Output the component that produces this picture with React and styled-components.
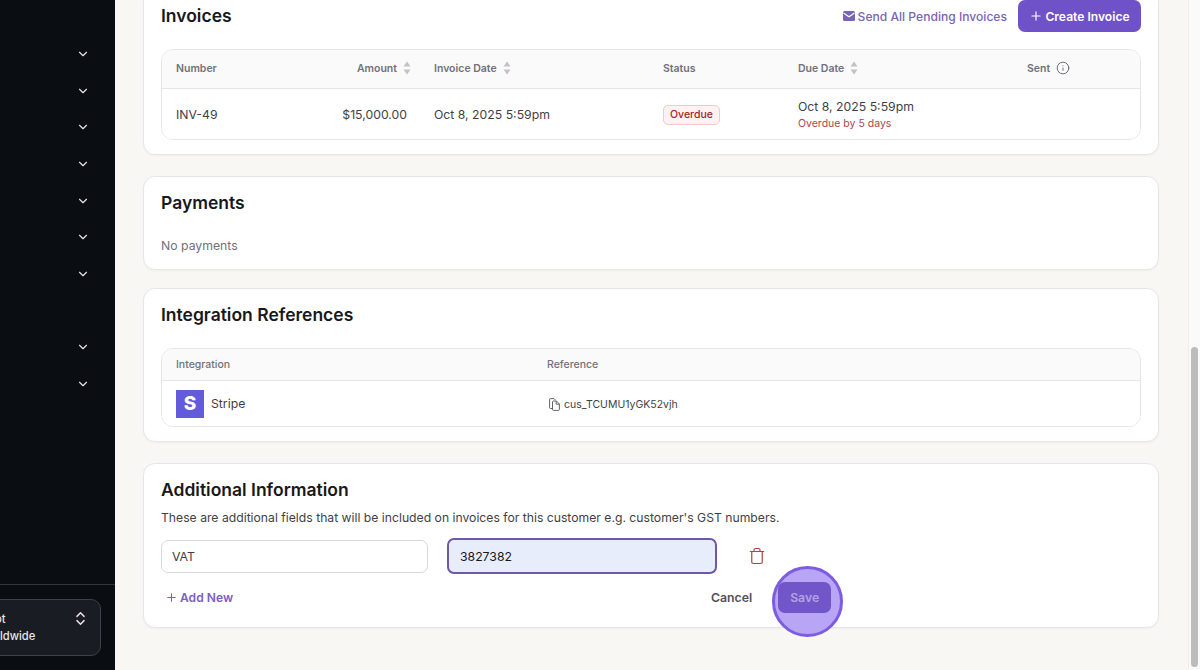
import React from "react";
import styled, { createGlobalStyle } from "styled-components";
import { ChevronDown, ChevronsUpDown, Plus, Trash, Info } from "lucide-react";

const GlobalStyle = createGlobalStyle`
	html, body {
		margin: 0;
		height: 100%;
		overflow: hidden;
		font-family: Inter, "Liberation Sans", sans-serif;
	}
	* {
		box-sizing: border-box;
	}
`;

const SortIcon = () => (
	<SortSvg viewBox="0 0 8 14" width="8" height="14">
		<path d="M4 0.5 L7.5 5.5 H0.5 Z" fill="#c2c2c6" />
		<path d="M4 13.5 L7.5 8.5 H0.5 Z" fill="#c2c2c6" />
	</SortSvg>
);

const MailIcon = () => (
	<svg viewBox="0 0 12 10" width="12" height="10">
		<rect x="0" y="0" width="12" height="10" rx="1.5" fill="#7a64b8" />
		<path d="M0.5 2 L6 5.8 L11.5 2" fill="none" stroke="#fff" strokeWidth="1.1" />
	</svg>
);

const CopyIcon = () => (
	<svg viewBox="0 0 11 13" width="11" height="13" fill="none" stroke="#52525b" strokeWidth="0.9">
		<path d="M3.5 10.5 H1.6 a1 1 0 0 1-1-1 V1.6 a1 1 0 0 1 1-1 H5 l1.6 1.6" />
		<path d="M3.5 4 a1 1 0 0 1 1-1 H7.4 L10.4 6 V11.4 a1 1 0 0 1-1 1 H4.5 a1 1 0 0 1-1-1 Z" />
		<path d="M7.2 3 V6.2 H10.4" />
	</svg>
);

const App = () => {
	const rows = [true, true, true, true, true, true, true, false, true, true];

	return (
		<Page>
			<GlobalStyle />
			<Sidebar>
				<NavList>
					{rows.map((on, i) => (
						<NavRow key={i}>{on && <ChevronDown size={14} strokeWidth={2} />}</NavRow>
					))}
				</NavList>
				<SidebarFooter>
					<Switcher>
						<SwitcherText>
							<SwitcherLine $shift={-5}>ot</SwitcherLine>
							<SwitcherLine>ldwide</SwitcherLine>
						</SwitcherText>
						<SwitcherIcon>
							<ChevronsUpDown size={17} strokeWidth={2} />
						</SwitcherIcon>
					</Switcher>
				</SidebarFooter>
			</Sidebar>

			<Main>
				<Card $top={-11} $height={166}>
					<CardHeader>
						<Title>Invoices</Title>
						<HeaderActions>
							<SendLink>
								<MailIcon />
								Send All Pending Invoices
							</SendLink>
							<CreateButton>
								<Plus size={14} strokeWidth={2} />
								Create Invoice
							</CreateButton>
						</HeaderActions>
					</CardHeader>
					<TableBox>
						<InvoiceGrid $head>
							<HeadCell>Number</HeadCell>
							<HeadCell $right>
								Amount <SortIcon />
							</HeadCell>
							<HeadCell>
								Invoice Date <SortIcon />
							</HeadCell>
							<HeadCell>Status</HeadCell>
							<HeadCell>
								Due Date <SortIcon />
							</HeadCell>
							<HeadCell>
								Sent <Info size={14} strokeWidth={1.4} color="#52525b" />
							</HeadCell>
						</InvoiceGrid>
						<InvoiceGrid>
							<BodyCell>INV-49</BodyCell>
							<AmountCell>$15,000.00</AmountCell>
							<BodyCell>Oct 8, 2025 5:59pm</BodyCell>
							<BodyCell>
								<Badge>Overdue</Badge>
							</BodyCell>
							<BodyCell>
								<div>
									Oct 8, 2025 5:59pm
									<OverdueNote>Overdue by 5 days</OverdueNote>
								</div>
							</BodyCell>
							<BodyCell />
						</InvoiceGrid>
					</TableBox>
				</Card>

				<Card $top={21} $height={94}>
					<Title>Payments</Title>
					<Muted>No payments</Muted>
				</Card>

				<Card $top={18} $height={154}>
					<Title>Integration References</Title>
					<RefBox>
						<RefGrid $head>
							<RefHead>Integration</RefHead>
							<RefHead>Reference</RefHead>
						</RefGrid>
						<RefGrid>
							<StripeCell>
								<StripeLogo>S</StripeLogo>
								Stripe
							</StripeCell>
							<ReferenceCell>
								<CopyIcon />
								cus_TCUMU1yGK52vjh
							</ReferenceCell>
						</RefGrid>
					</RefBox>
				</Card>

				<Card $top={21} $height={165}>
					<Title>Additional Information</Title>
					<Description>
						These are additional fields that will be included on invoices for this customer e.g.
						customer's GST numbers.
					</Description>
					<FieldRow>
						<TextField readOnly value="VAT" />
						<ActiveField readOnly value="3827382" />
						<TrashButton>
							<Trash size={18} strokeWidth={1.6} />
						</TrashButton>
					</FieldRow>
					<FooterRow>
						<AddNew>
							<Plus size={13} strokeWidth={2} />
							Add New
						</AddNew>
						<FooterActions>
							<CancelButton>Cancel</CancelButton>
							<SaveWrap>
								<Spotlight />
								<SaveButton>Save</SaveButton>
							</SaveWrap>
						</FooterActions>
					</FooterRow>
				</Card>
			</Main>

			<ScrollTrack>
				<ScrollThumb />
			</ScrollTrack>
		</Page>
	);
};

const Page = styled.div`
	display: flex;
	width: 1200px;
	height: 670px;
	overflow: hidden;
	background: #f8f7f3;
	color: #18181b;
`;

const Sidebar = styled.aside`
	width: 115px;
	flex-shrink: 0;
	display: flex;
	flex-direction: column;
	background: #0a0d12;
	color: #e6e6e8;
	overflow: hidden;
`;

const NavList = styled.div`
	padding-top: 35.7px;
	flex: 1;
`;

const NavRow = styled.div`
	height: 36.65px;
	display: flex;
	align-items: center;
	justify-content: flex-end;
	padding-right: 25px;
`;

const SidebarFooter = styled.div`
	border-top: 1px solid #33363b;
	padding: 14px 14px 14px 0;
`;

const Switcher = styled.div`
	height: 57px;
	margin-left: -20px;
	padding: 0 11px 0 19px;
	display: flex;
	align-items: center;
	justify-content: space-between;
	background: #1a1c24;
	border: 1px solid #3f4148;
	border-radius: 10px;
`;

const SwitcherText = styled.div`
	font-size: 11.2px;
	font-weight: 500;
	line-height: 17px;
`;

const SwitcherLine = styled.div`
	margin-left: ${({ $shift }) => $shift || 0}px;
`;

const SwitcherIcon = styled.span`
	display: flex;
	align-self: flex-start;
	margin-top: 10px;
`;

const Main = styled.main`
	flex: 1;
	padding: 0 29px 0 28px;
	min-width: 0;
`;

const Card = styled.section`
	height: ${({ $height }) => $height}px;
	margin-top: ${({ $top }) => $top}px;
	padding: 14px 17px;
	background: #fff;
	border: 1px solid #e6e6e6;
	border-radius: 12px;
	box-shadow: 0 1px 2px rgba(0, 0, 0, 0.04);
`;

const CardHeader = styled.div`
	display: flex;
	justify-content: space-between;
	align-items: center;
	height: 32px;
	margin-top: -4px;
	margin-bottom: 17px;
`;

const Title = styled.h2`
	margin: 0;
	font-size: 17.5px;
	line-height: 24px;
	font-weight: 600;
	color: #18181b;
`;

const HeaderActions = styled.div`
	display: flex;
	align-items: center;
	gap: 11px;
`;

const SendLink = styled.span`
	display: inline-flex;
	align-items: center;
	gap: 3px;
	font-size: 12.1px;
	font-weight: 500;
	color: #7a64b8;
`;

const CreateButton = styled.span`
	display: inline-flex;
	align-items: center;
	justify-content: center;
	gap: 2px;
	width: 123px;
	height: 32px;
	font-size: 12.1px;
	font-weight: 600;
	color: #fff;
	background: #6f52c8;
	border-radius: 7px;
`;

const TableBox = styled.div`
	border: 1px solid #e6e6e6;
	border-radius: 12px;
	overflow: hidden;
	height: 91px;
`;

const InvoiceGrid = styled.div`
	display: grid;
	grid-template-columns: 138px 120px 229px 135px 229px 1fr;
	height: ${({ $head }) => ($head ? "39px" : "51px")};
	background: ${({ $head }) => ($head ? "#fafafa" : "#fff")};
	border-bottom: ${({ $head }) => ($head ? "1px solid #e6e6e6" : "none")};
`;

const HeadCell = styled.div`
	display: flex;
	align-items: center;
	justify-content: ${({ $right }) => ($right ? "flex-end" : "flex-start")};
	gap: 6px;
	padding: ${({ $right }) => ($right ? "0 9px 2px 0" : "0 14px 2px")};
	font-size: 10.5px;
	font-weight: 600;
	color: #71717a;
`;

const SortSvg = styled.svg`
	flex-shrink: 0;
`;

const BodyCell = styled.div`
	display: flex;
	align-items: center;
	padding: 0 14px;
	font-size: 12.25px;
	color: #3f3f46;
`;

const AmountCell = styled(BodyCell)`
	justify-content: flex-end;
	padding-right: 13px;
`;

const Badge = styled.span`
	display: inline-flex;
	align-items: center;
	height: 20px;
	padding: 0 6px;
	font-size: 10.5px;
	font-weight: 500;
	color: #a3232f;
	background: #fdf2f2;
	border: 1px solid #f3c9c9;
	border-radius: 5px;
`;

const OverdueNote = styled.div`
	margin-top: 3px;
	font-size: 10.5px;
	color: #a8474f;
`;

const Muted = styled.p`
	margin: 23px 0 0;
	font-size: 12.25px;
	color: #71717a;
`;

const RefBox = styled.div`
	margin-top: 21px;
	height: 79px;
	border: 1px solid #e6e6e6;
	border-radius: 12px;
	overflow: hidden;
`;

const RefGrid = styled.div`
	display: grid;
	grid-template-columns: 371px 1fr;
	align-items: center;
	height: ${({ $head }) => ($head ? "32px" : "45px")};
	background: ${({ $head }) => ($head ? "#fafafa" : "#fff")};
	border-bottom: ${({ $head }) => ($head ? "1px solid #e6e6e6" : "none")};
`;

const RefHead = styled.div`
	padding-left: 14px;
	font-size: 10.5px;
	font-weight: 500;
	color: #71717a;
`;

const StripeCell = styled.div`
	display: flex;
	align-items: center;
	gap: 7px;
	padding-left: 14px;
	font-size: 12.25px;
	color: #3f3f46;
`;

const StripeLogo = styled.span`
	display: flex;
	align-items: center;
	justify-content: center;
	width: 28px;
	height: 28px;
	font-size: 19px;
	font-weight: 800;
	color: #fff;
	background: #635bdb;
`;

const ReferenceCell = styled.div`
	display: flex;
	align-items: center;
	gap: 4px;
	padding: 1px 0 0 16px;
	font-size: 10.5px;
	color: #3f3f46;
`;

const Description = styled.p`
	margin: 7px 0 0;
	font-size: 12.2px;
	line-height: 18px;
	color: #3f3f46;
`;

const FieldRow = styled.div`
	display: flex;
	align-items: center;
	margin-top: 11px;
	height: 36px;
`;

const TextField = styled.input`
	width: 267px;
	height: 33px;
	padding: 0 10px;
	font: 400 12.25px Inter, sans-serif;
	color: #3f3f46;
	background: #fff;
	border: 1px solid #d8d8dc;
	border-radius: 7px;
	outline: none;
`;

const ActiveField = styled(TextField)`
	width: 270px;
	height: 36px;
	margin-left: 19px;
	padding-left: 11px;
	color: #18181b;
	background: #e8edfb;
	border: 2px solid #6e58a8;
	border-radius: 7px;
`;

const TrashButton = styled.span`
	display: flex;
	margin-left: 31px;
	color: #b5433b;
`;

const FooterRow = styled.div`
	display: flex;
	align-items: center;
	margin-top: 7px;
	height: 32px;
`;

const AddNew = styled.span`
	display: inline-flex;
	flex: 0 0 546px;
	align-items: center;
	gap: 2px;
	margin-left: 4px;
	font-size: 12.1px;
	font-weight: 600;
	color: #7a5fc0;
`;

const FooterActions = styled.div`
	display: flex;
	align-items: center;
	gap: 26px;
`;

const CancelButton = styled.span`
	font-size: 12.25px;
	font-weight: 600;
	color: #52525b;
`;

const SaveWrap = styled.div`
	position: relative;
	width: 53px;
	height: 31px;
`;

const Spotlight = styled.div`
	position: absolute;
	left: -6px;
	top: -16px;
	width: 71px;
	height: 71px;
	background: #b8a5f6;
	border: 3px solid #7c5ce0;
	border-radius: 50%;
`;

const SaveButton = styled.span`
	position: absolute;
	inset: 0;
	display: flex;
	align-items: center;
	justify-content: center;
	font-size: 12.25px;
	font-weight: 600;
	color: #b3a2e6;
	background: #7056c8;
	border-radius: 7px;
`;

const ScrollTrack = styled.div`
	position: relative;
	width: 12px;
	flex-shrink: 0;
	background: #fafafa;
	border-left: 1px solid #eeeeee;
`;

const ScrollThumb = styled.div`
	position: absolute;
	left: 2px;
	top: 347px;
	width: 7px;
	height: 320px;
	background: #bcbcbc;
	border-radius: 4px;
`;

export default App;
